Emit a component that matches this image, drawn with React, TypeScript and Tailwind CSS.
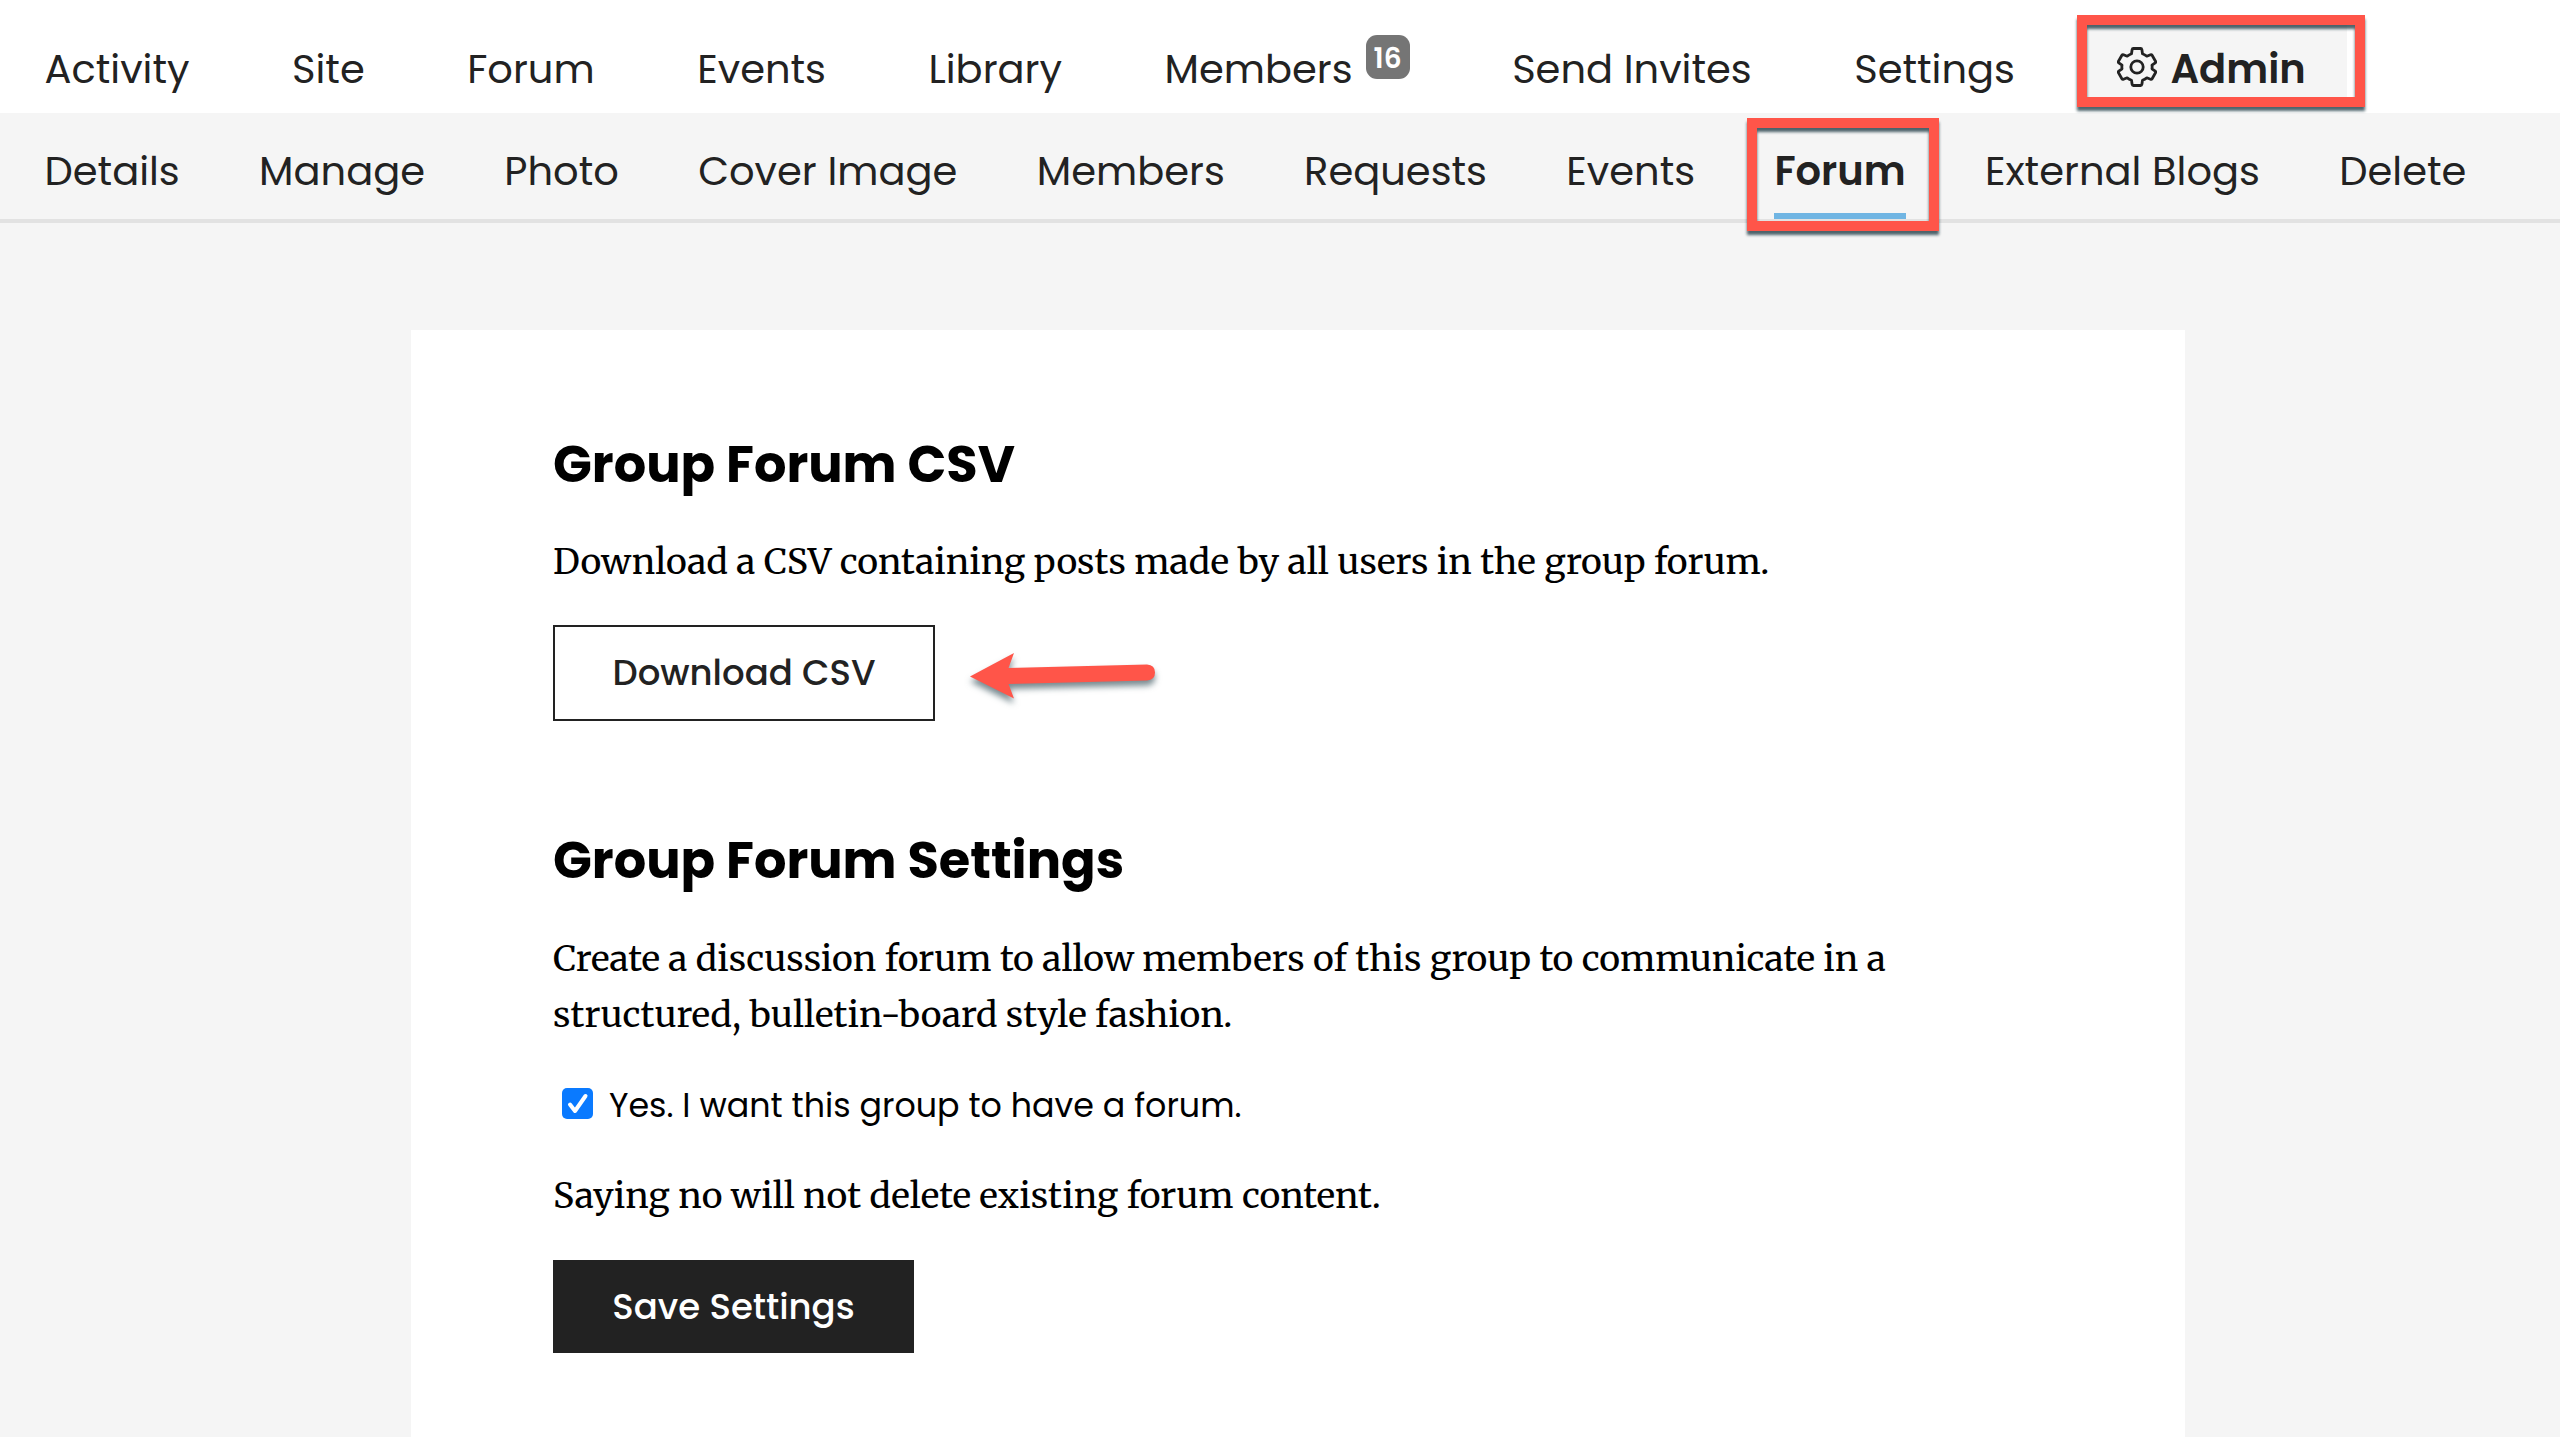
import { Fragment } from "react"

const groupNav = ["Activity", "Site", "Forum", "Events", "Library", "Members", "Send Invites", "Settings"]

const adminNav = [
  "Details",
  "Manage",
  "Photo",
  "Cover Image",
  "Members",
  "Requests",
  "Events",
  "Forum",
  "External Blogs",
  "Delete",
]

function GearIcon() {
  return (
    <svg viewBox="0 0 40 40" className="w-10 h-10 -mt-[4px]" fill="none" stroke="#222" strokeWidth="2.8" strokeLinejoin="round">
      <path d="M16.4 1.500h7.200q1.100 0 1.300 1.200l.6 4q2.300.9 4.300 2.500l3.700-1.500q1-.4 1.600.6l3.400 5.900q.5 1-.3 1.600L35 18.200q.3 1.800 0 3.600l3.200 2.400q.8.6.3 1.600l-3.400 5.900q-.6 1-1.600.6l-3.700-1.500q-2 1.600-4.300 2.500l-.6 4q-.2 1.200-1.300 1.200h-7.200q-1.100 0-1.300-1.200l-.6-4q-2.300-.9-4.300-2.500l-3.700 1.500q-1 .4-1.600-.6l-3.400-5.900q-.5-1 .3-1.600L5 21.800q-.3-1.800 0-3.600l-3.200-2.400q-.8-.6-.3-1.600l3.400-5.900q.6-1 1.600-.6l3.700 1.500q2-1.600 4.300-2.500l.6-4q.2-1.200 1.300-1.200z" />
      <circle cx="20" cy="20" r="6.2" />
    </svg>
  )
}

function Arrow() {
  return (
    <svg
      viewBox="0 0 190 56"
      className="w-[190px] h-14 ml-[33px] mt-[6px] overflow-visible drop-shadow-[0_5px_3px_rgba(30,60,70,0.6)]"
    >
      <path
        d="M2 28.500L46 5L40.500 20L179 16.500Q187 17 187 24.500Q187 32 179 32.500L40.500 36L46 50.500Z"
        fill="#ff5549"
      />
    </svg>
  )
}

export default function App() {
  return (
    <div className="w-[2560px] h-[1437px] overflow-hidden bg-[#f5f5f5] text-[#222] font-['Poppins','Inter',sans-serif]">
      <header className="h-[113px] bg-white">
        <nav className="flex items-center h-full pt-[25px] pl-[44.5px] gap-[102.5px] text-[40px] leading-[60px] whitespace-nowrap">
          {groupNav.map((item) => (
            <Fragment key={item}>
              {item === "Members" ? (
                <a href="#" className="flex">
                  {item}
                  <span className="flex items-center justify-center w-11 h-11 pt-[3px] ml-[13px] -mt-[4px] rounded-[11px] bg-[#757575] text-white text-[28px] leading-none font-semibold">
                    16
                  </span>
                </a>
              ) : (
                <a href="#">{item}</a>
              )}
            </Fragment>
          ))}
          <a
            href="#"
            className="relative flex items-center gap-[13px] h-[80px] -mt-[24px] pt-[17px] -ml-[41px] pl-[41px] pr-[41px] translate-y-[3px] bg-[#f5f5f5] font-semibold"
          >
            <GearIcon />
            Admin
            <span className="absolute left-[1px] -top-[5px] w-[288px] h-[92px] border-[10px] border-[#ff5549] drop-shadow-[0_4px_1.5px_rgba(20,50,60,0.75)]" />
          </a>
        </nav>
      </header>

      <nav className="flex h-[110px] pt-[28px] pl-[44.5px] gap-[79.3px] border-b-4 border-[#e2e2e2] text-[40px] leading-[60px] whitespace-nowrap">
        {adminNav.map((item) =>
          item === "Forum" ? (
            <a key={item} href="#" className="relative h-[78px] border-b-[6px] border-[#70b5e3] font-semibold">
              {item}
              <span className="absolute -left-[27px] -top-[23px] w-[192px] h-[113px] border-[10px] border-[#ff5549] drop-shadow-[0_4px_1.5px_rgba(20,50,60,0.75)]" />
            </a>
          ) : (
            <a key={item} href="#">
              {item}
            </a>
          )
        )}
      </nav>

      <main className="w-[1774px] h-[1107px] ml-[411px] mt-[107px] pt-[96px] pl-[142px] bg-white text-black">
        <section>
          <h2 className="text-[51px] leading-[77px] font-bold">Group Forum CSV</h2>
          <p className="mt-[31px] text-[35.5px] leading-[56.5px] font-['Merriweather','Noto_Serif',serif]">
            Download a CSV containing posts made by all users in the group forum.
          </p>
          <div className="flex items-center mt-[34px]">
            <button className="w-[382px] h-[96px] border-2 border-[#222] text-[35.5px] font-medium text-[#222]">
              Download CSV
            </button>
            <Arrow />
          </div>
        </section>

        <section className="mt-[101px]">
          <h2 className="text-[51px] leading-[77px] font-bold">Group Forum Settings</h2>
          <p className="w-[1400px] mt-[32px] text-[35.5px] leading-[56.5px] font-['Merriweather','Noto_Serif',serif]">
            Create a discussion forum to allow members of this group to communicate in a structured, bulletin-board
            style fashion.
          </p>
          <label className="flex items-center gap-[16px] mt-[34px] pl-[9px] text-[33.3px] leading-[56px]">
            <span className="flex items-center justify-center w-[31px] h-[31px] -mt-[4px] rounded-[5px] bg-[#0a7aff]">
              <svg viewBox="0 0 31 31" className="w-[31px] h-[31px]" fill="none" stroke="white" strokeWidth="4" strokeLinecap="round" strokeLinejoin="round">
                <path d="M8 16.500L13 23L23.500 8" />
              </svg>
            </span>
            Yes. I want this group to have a forum.
          </label>
          <p className="mt-[34px] text-[35.5px] leading-[56.5px] font-['Merriweather','Noto_Serif',serif]">
            Saying no will not delete existing forum content.
          </p>
          <button className="w-[361px] h-[93px] mt-[36px] bg-[#222] text-white text-[35.5px] font-medium">
            Save Settings
          </button>
        </section>
      </main>
    </div>
  )
}
